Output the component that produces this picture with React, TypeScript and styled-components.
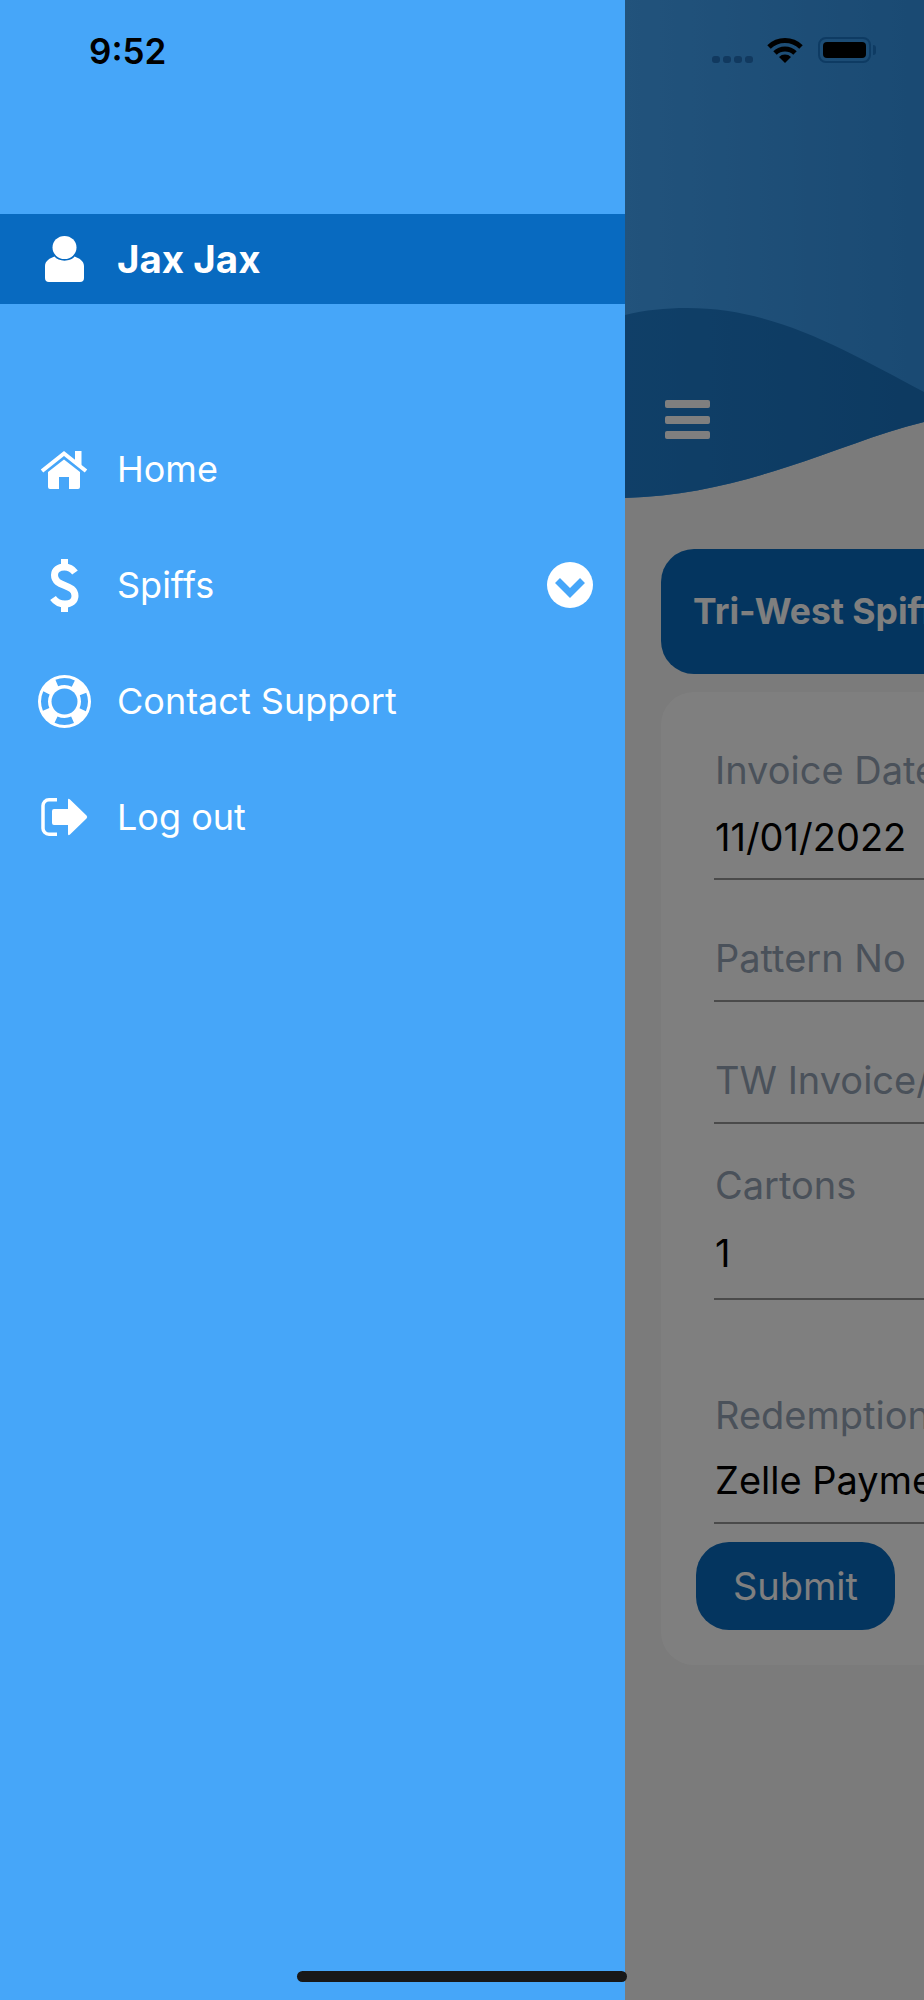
import React from 'react';
import styled, { createGlobalStyle } from 'styled-components';

const GlobalStyle = createGlobalStyle`
  html, body {
    margin: 0;
    padding: 0;
  }
  body {
    font-family: Inter, "Noto Sans", sans-serif;
  }
`;

const Screen = styled.div`
  position: relative;
  display: flex;
  width: 924px;
  height: 2000px;
  overflow: hidden;
`;

const Drawer = styled.nav`
  flex: 0 0 625px;
  display: flex;
  flex-direction: column;
  background-color: #46a6f9;
  color: #fff;
`;

const StatusRow = styled.div`
  height: 214px;
  box-sizing: border-box;
  padding: 29px 0 0 89px;
`;

const Time = styled.span`
  font-size: 35px;
  line-height: 44px;
  font-weight: 600;
  color: #000;
`;

const UserBar = styled.div`
  height: 90px;
  display: flex;
  align-items: center;
  background-color: #086ac0;
`;

const IconSlot = styled.span`
  flex: 0 0 60px;
  margin: 0 23px 0 34px;
  display: flex;
  justify-content: center;
  align-items: center;
`;

const UserName = styled.span`
  font-size: 38.5px;
  font-weight: 700;
`;

const Menu = styled.ul`
  list-style: none;
  margin: 107px 0 0;
  padding: 0;
`;

const MenuItem = styled.li`
  height: 116px;
  display: flex;
  align-items: center;
  font-size: 36px;
`;

const MenuLabel = styled.span`
  flex: 1;
`;

const Expand = styled.svg`
  margin-right: 32px;
`;

const Main = styled.div`
  position: relative;
  flex: 1;
  min-width: 0;
  overflow: hidden;
`;

const Page = styled.div`
  width: 924px;
  height: 2000px;
  background-color: #f6f6f6;
`;

const Hero = styled.header`
  position: relative;
  height: 498px;
`;

const Burger = styled.div`
  position: absolute;
  left: 40px;
  top: 400px;
  width: 45px;
  display: flex;
  flex-direction: column;
  gap: 7.5px;
`;

const BurgerBar = styled.span`
  height: 8px;
  border-radius: 2px;
  background-color: #fff;
`;

const TitleCard = styled.div`
  height: 125px;
  margin: 51px 0 18px 36px;
  padding-left: 32px;
  display: flex;
  align-items: center;
  border-radius: 33px;
  background-color: #086abe;
  color: #fff;
  font-size: 35.5px;
  font-weight: 700;
`;

const FormCard = styled.form`
  height: 973px;
  box-sizing: border-box;
  margin-left: 36px;
  padding: 50px 0 0 35px;
  border-radius: 33px;
  background-color: #fff;
`;

const FieldList = styled.div`
  padding-left: 18px;
`;

const Field = styled.div<{ $top: number; $bottom?: number }>`
  margin-top: ${p => p.$top}px;
  padding: 0 0 ${p => p.$bottom ?? 14}px 1px;
  border-bottom: 2px solid #949494;
  white-space: nowrap;
`;

const FieldLabel = styled.div`
  font-size: 38px;
  line-height: 56px;
  color: #94a3b4;
`;

const FieldValue = styled.div<{ $gap: number }>`
  margin-top: ${p => p.$gap}px;
  font-size: 38px;
  line-height: 56px;
  color: #000;
`;

const SubmitButton = styled.button`
  display: block;
  width: 199px;
  height: 88px;
  margin-top: 18px;
  padding: 0;
  border: none;
  border-radius: 33px;
  background-color: #086abe;
  color: #fff;
  font-family: inherit;
  font-size: 38px;
`;

const Dim = styled.div`
  position: absolute;
  inset: 0;
  background-color: rgba(0, 0, 0, 0.5);
`;

const StatusIcons = styled.div`
  position: absolute;
  top: 37px;
  left: 87px;
  display: flex;
  align-items: flex-start;
`;

const Signal = styled.div`
  display: flex;
  gap: 3px;
  margin: 19px 14px 0 0;
`;

const SignalDot = styled.span`
  width: 8px;
  height: 7px;
  border-radius: 3px;
  background-color: #11395f;
`;

const Battery = styled.div`
  position: relative;
  width: 53px;
  height: 26px;
  margin-left: 15px;
  box-sizing: border-box;
  padding: 3px;
  border: 2px solid #0e3b63;
  border-radius: 8px;

  &::before {
    content: '';
    display: block;
    height: 100%;
    border-radius: 4px;
    background-color: #000;
  }

  &::after {
    content: '';
    position: absolute;
    right: -7px;
    top: 6px;
    width: 3px;
    height: 10px;
    border-radius: 0 3px 3px 0;
    background-color: #0e3b63;
  }
`;

const HomeIndicator = styled.div`
  position: absolute;
  left: 297px;
  top: 1971px;
  width: 330px;
  height: 11px;
  border-radius: 6px;
  background-color: #181818;
`;

const BLUE = '#46a6f9';

const UserIcon = () => (
  <svg width="39" height="46" viewBox="0 0 39 46" fill="#fff">
    <ellipse cx="19.5" cy="11.5" rx="12" ry="11.5" />
    <path d="M0 30C0 25 5 22 9.5 20.5C13 26 26 26 29.5 20.5C34 22 39 25 39 30V42Q39 46 35 46H4Q0 46 0 42Z" />
  </svg>
);

const HomeIcon = () => (
  <svg width="48" height="39" viewBox="0 0 48 39" fill="#fff">
    <rect x="35" y="1" width="6.5" height="14" />
    <path d="M2 21L24 3.5L46 21" fill="none" stroke="#fff" strokeWidth="4" />
    <path d="M8 22L24 9.5L40 22V37Q40 39 38 39H29V27H19V39H10Q8 39 8 37Z" />
  </svg>
);

const DollarIcon = () => (
  <svg width="29" height="53" viewBox="0 0 29 53" fill="#fff">
    <rect x="11" y="0" width="7" height="8" />
    <rect x="11" y="45" width="7" height="8" />
    <path
      d="M25 13.5C22 9.5 18 8 14.5 8C8.5 8 4.5 11.5 4.5 16C4.5 29 25 24 25 37C25 41.5 21 45 15 45C9.5 45 5.5 42.5 3 39"
      fill="none"
      stroke="#fff"
      strokeWidth="7"
    />
  </svg>
);

const RingIcon = () => (
  <svg width="53" height="53" viewBox="0 0 53 53">
    <circle cx="26.5" cy="26.5" r="26.5" fill="#fff" />
    <circle
      cx="26.5"
      cy="26.5"
      r="20"
      fill="none"
      stroke={BLUE}
      strokeWidth="7"
      strokeDasharray="17 14.416"
      strokeDashoffset="8.5"
    />
    <circle cx="26.5" cy="26.5" r="13" fill={BLUE} />
  </svg>
);

const LogoutIcon = () => (
  <svg width="47" height="38" viewBox="0 0 47 38" fill="#fff">
    <path d="M16 1.75H8A6 6 0 0 0 2 8V30A6 6 0 0 0 8 36.25H16" fill="none" stroke="#fff" strokeWidth="3.5" />
    <path d="M13 11H27V2Q27 0 29 1.5L45.5 17.5Q47 19 45.5 20.5L29 36.5Q27 38 27 36V27H13Q11 27 11 25V13Q11 11 13 11Z" />
  </svg>
);

const WifiIcon = () => (
  <svg width="36" height="26" viewBox="0 0 36 26" fill="none" stroke="#000">
    <path d="M2 10A23 23 0 0 1 34 10" strokeWidth="5" />
    <path d="M8 16A14.5 14.5 0 0 1 28 16" strokeWidth="5" />
    <path d="M18 26L12 20A8.5 8.5 0 0 1 24 20Z" fill="#000" stroke="none" />
  </svg>
);

const HeroWave = () => (
  <svg width="299" height="498" viewBox="0 0 299 498" style={{ display: 'block' }}>
    <defs>
      <linearGradient id="sky" x1="0" x2="1" y1="0" y2="0">
        <stop offset="0" stopColor="#44a6f8" />
        <stop offset="1" stopColor="#3494e6" />
      </linearGradient>
      <linearGradient id="swell" x1="0" x2="1" y1="0" y2="0">
        <stop offset="0" stopColor="#207fd0" />
        <stop offset="1" stopColor="#1a74c2" />
      </linearGradient>
    </defs>
    <path d="M0 0H299V422C250 434 210 452 162 467C110 484 60 496 0 498Z" fill="url(#sky)" />
    <path
      d="M0 315C20 310 40 308 62 308C150 308 220 350 299 392V422C250 434 210 452 162 467C110 484 60 496 0 498Z"
      fill="url(#swell)"
    />
  </svg>
);

const App: React.FC = () => {
  return (
    <>
      <GlobalStyle />
      <Screen>
        <Drawer>
          <StatusRow>
            <Time>9:52</Time>
          </StatusRow>
          <UserBar>
            <IconSlot>
              <UserIcon />
            </IconSlot>
            <UserName>Jax Jax</UserName>
          </UserBar>
          <Menu>
            <MenuItem>
              <IconSlot>
                <HomeIcon />
              </IconSlot>
              <MenuLabel>Home</MenuLabel>
            </MenuItem>
            <MenuItem>
              <IconSlot>
                <DollarIcon />
              </IconSlot>
              <MenuLabel>Spiffs</MenuLabel>
              <Expand width="46" height="46" viewBox="0 0 46 46">
                <circle cx="23" cy="23" r="23" fill="#fff" />
                <path d="M10.5 18.5L23 31L35.5 18.5" fill="none" stroke={BLUE} strokeWidth="7" />
              </Expand>
            </MenuItem>
            <MenuItem>
              <IconSlot>
                <RingIcon />
              </IconSlot>
              <MenuLabel>Contact Support</MenuLabel>
            </MenuItem>
            <MenuItem>
              <IconSlot>
                <LogoutIcon />
              </IconSlot>
              <MenuLabel>Log out</MenuLabel>
            </MenuItem>
          </Menu>
        </Drawer>
        <Main>
          <Page>
            <Hero>
              <HeroWave />
              <Burger>
                <BurgerBar />
                <BurgerBar />
                <BurgerBar />
              </Burger>
            </Hero>
            <TitleCard>Tri-West Spiff</TitleCard>
            <FormCard>
              <FieldList>
                <Field $top={0} $bottom={13}>
                  <FieldLabel>Invoice Date</FieldLabel>
                  <FieldValue $gap={11}>11/01/2022</FieldValue>
                </Field>
                <Field $top={50}>
                  <FieldLabel>Pattern No</FieldLabel>
                </Field>
                <Field $top={50}>
                  <FieldLabel>TW Invoice/PO</FieldLabel>
                </Field>
                <Field $top={33} $bottom={17}>
                  <FieldLabel>Cartons</FieldLabel>
                  <FieldValue $gap={12}>1</FieldValue>
                </Field>
                <Field $top={87}>
                  <FieldLabel>Redemption Type</FieldLabel>
                  <FieldValue $gap={9}>Zelle Payment</FieldValue>
                </Field>
              </FieldList>
              <SubmitButton type="button">Submit</SubmitButton>
            </FormCard>
          </Page>
          <Dim />
          <StatusIcons>
            <Signal>
              <SignalDot />
              <SignalDot />
              <SignalDot />
              <SignalDot />
            </Signal>
            <WifiIcon />
            <Battery />
          </StatusIcons>
        </Main>
        <HomeIndicator />
      </Screen>
    </>
  );
};

export default App;
